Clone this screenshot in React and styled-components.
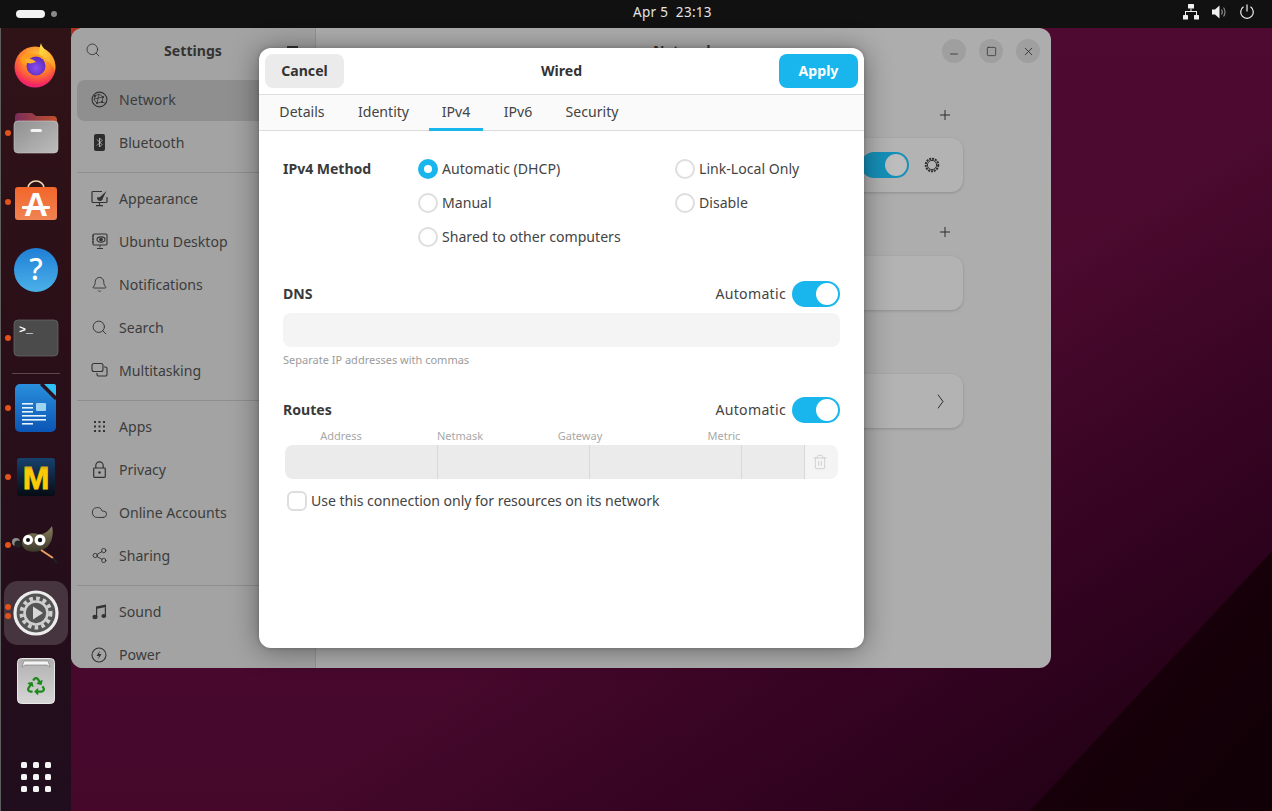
import React from 'react';
import styled, { createGlobalStyle } from 'styled-components';
import { Search, Bell, Cloud, Share2, Trash2, Plus, Minus, X, Square } from 'lucide-react';
import { FaRecycle } from 'react-icons/fa';

const FONT = '"Noto Sans", "Open Sans", sans-serif';

const Global = createGlobalStyle`
  html, body { margin: 0; padding: 0; width: 1272px; height: 811px; overflow: hidden; background: #300020; }
  * { box-sizing: border-box; }
  body { font-family: ${FONT}; font-size: 14.1px; color: #3a3a3a; }
`;

const Screen = styled.div`
  width: 1272px; height: 811px; display: flex; flex-direction: column; overflow: hidden;
`;
const TopBar = styled.header`
  height: 28px; flex: none; background: #111; display: grid; grid-template-columns: 633px auto 1fr; align-items: center; color: #e4e4e4;
`;
const Activities = styled.div`
  display: flex; align-items: center; gap: 6px; padding-left: 16px;
`;
const Pill = styled.span`
  width: 29px; height: 8px; border-radius: 4px; background: #f2f2f2;
`;
const WsDot = styled.span`
  width: 6px; height: 6px; border-radius: 50%; background: #8a8a8a;
`;
const Clock = styled.div`
  font-size: 13.5px; letter-spacing: .3px; white-space: pre; line-height: 22px; margin-top: -5px;
`;
const Tray = styled.div`
  display: flex; justify-content: flex-end; align-items: center; gap: 12px; padding-right: 17px; margin-top: -4px;
`;
const Desktop = styled.main`
  flex: 1; position: relative; display: flex;
  background:
    linear-gradient(133deg, transparent 87.85%, #170009 87.95%, #100006 100%),
    radial-gradient(circle at 71px 0, #b8341f 0, #a02c22 10px, transparent 40px),
    linear-gradient(145deg, transparent 58%, rgba(40,0,26,.75) 81%, rgba(20,0,12,.9) 100%),
    linear-gradient(180deg, #4e0a30 0%, #45082b 100%);
`;
const Dock = styled.nav`
  width: 71px; flex: none; display: flex; flex-direction: column; align-items: center; padding-top: 3px;
  border-left: 1px solid #5e5e5e;
  background: linear-gradient(180deg, #2f1317 0%, #2a0f18 40%, #200d1d 100%);
`;
const DockItem = styled.div`
  position: relative; width: 70px; height: 68.25px; flex: none; display: flex; align-items: center; justify-content: center;
  margin-left: -1px;
  ${p => p.$pushEnd ? 'margin-top: auto; height: 68px;' : ''}
`;
const DockActive = styled.div`
  width: 64px; height: 64px; border-radius: 14px; display: flex; align-items: center; justify-content: center;
  background: ${p => p.$on ? '#46343f' : 'transparent'};
`;
const RunDot = styled.span`
  position: absolute; left: 4px; top: ${p => p.$top}px; width: 6px; height: 6px; border-radius: 50%; background: #e1521d;
`;
const DockRule = styled.div`
  width: 48px; height: 1px; background: #5a4650; margin: 1px 0 0; flex: none;
`;
const AppGrid = styled.div`
  display: grid; grid-template-columns: repeat(3, 6px); grid-auto-rows: 6px; gap: 6px;
`;
const AppDot = styled.span`
  background: #f4f4f4; border-radius: 1.5px;
`;

const Window = styled.section`
  position: absolute; left: 71px; top: 0; width: 980px; height: 640px; border-radius: 12px; overflow: hidden; display: flex;
  background: #adadad;
`;
const Sidebar = styled.aside`
  width: 245px; flex: none; background: #a3a3a3; border-right: 1px solid #949494; padding: 0 6px; overflow: hidden;
  display: flex; flex-direction: column;
`;
const SideHeader = styled.div`
  height: 52px; flex: none; position: relative; display: flex; align-items: flex-start; justify-content: center; padding-top: 13px;
  font-weight: 700; color: #333;
`;
const SideSearch = styled.span`
  position: absolute; left: 8px; top: 14px; display: flex; color: #333;
`;
const Burger = styled.span`
  position: absolute; right: 11px; top: 18px; width: 11px; height: 1.5px; background: #333; box-shadow: 0 5px 0 #333, 0 10px 0 #333;
`;
const SideRow = styled.div`
  height: 41px; flex: none; margin-bottom: 2px; display: flex; align-items: center; padding: 0 0 2px 13px; gap: 11px; border-radius: 8px; color: #3c3c3c;
  background: ${p => p.$on ? '#8f8f8f' : 'transparent'};
`;
const SideIcon = styled.span`
  width: 18px; height: 18px; flex: none; display: flex; align-items: center; justify-content: center; color: #333;
`;
const SideRule = styled.div`
  height: 1px; flex: none; background: #8e8e8e; margin: 6px 0 6px;
`;
const Panel = styled.div`
  flex: 1; display: flex; flex-direction: column; align-items: center; min-width: 0;
`;
const PanelHeader = styled.div`
  width: 100%; height: 72px; flex: none; display: grid; grid-template-columns: 1fr auto 1fr; align-items: start; padding: 11px 11px 0 0;
`;
const PanelTitle = styled.div`
  font-weight: 700; color: #333; line-height: 24px; margin-left: 12px;
`;
const WinControls = styled.div`
  display: flex; justify-content: flex-end; gap: 13px;
`;
const WinBtn = styled.span`
  width: 24px; height: 24px; border-radius: 50%; background: #9f9f9f; display: flex; align-items: center; justify-content: center; color: #2c2c2c;
`;
const Content = styled.div`
  width: 559px; display: flex; flex-direction: column;
`;
const SectionHead = styled.div`
  height: 30px; margin-top: ${p => p.$mt || 0}px; display: flex; align-items: center; justify-content: flex-end; padding-right: 10px; color: #2c2c2c;
`;
const Card = styled.div`
  height: 54px; margin-top: ${p => p.$mt || 0}px; border-radius: 12px; background: #b3b3b3; box-shadow: 0 1px 3px rgba(0,0,0,.18);
  display: flex; align-items: center; justify-content: flex-end; gap: 15px; padding-right: ${p => p.$pr || 23}px;
`;
const DimSwitch = styled.span`
  width: 48px; height: 26px; border-radius: 13px; background: #1590b8; position: relative; display: block;
  &::after { content: ''; position: absolute; right: 2px; top: 2px; width: 22px; height: 22px; border-radius: 50%; background: #bdbdbd; }
`;

const Dialog = styled.div`
  position: absolute; left: 259px; top: 20px; width: 605px; height: 600px; border-radius: 12px; background: #fff; display: flex; flex-direction: column;
  box-shadow: 0 2px 28px rgba(0,0,0,.42), 0 0 4px rgba(0,0,0,.2);
  overflow: hidden;
`;
const DialogHeader = styled.div`
  height: 47px; flex: none; display: grid; grid-template-columns: 1fr auto 1fr; align-items: center; padding: 0 6px; border-bottom: 1px solid #dedede;
`;
const DialogTitle = styled.div`
  font-weight: 700; color: #333; margin-bottom: 2px;
`;
const HeaderBtn = styled.div`
  width: 79px; height: 34px; border-radius: 8px; display: flex; align-items: center; justify-content: center; font-weight: 700; padding-bottom: 2px;
  justify-self: ${p => p.$end ? 'end' : 'start'};
  background: ${p => p.$primary ? '#19b6ee' : '#ebebeb'}; color: ${p => p.$primary ? '#fff' : '#333'};
`;
const TabBar = styled.div`
  height: 36px; flex: none; background: #fafafa; border-bottom: 1px solid #dcdcdc; display: flex; padding-left: 7px; gap: 6px;
`;
const Tab = styled.div`
  padding: 1px 0 2px; display: flex; align-items: center; color: #444; height: 36px; margin-bottom: -1px;
  border-bottom: 3px solid ${p => p.$on ? '#19b6ee' : 'transparent'};
  width: ${p => p.$w}px; justify-content: center;
`;
const Body = styled.div`
  flex: 1; padding: 21px 24px 0; display: flex; flex-direction: column;
`;
const MethodGrid = styled.div`
  display: grid; grid-template-columns: 135px 257px 1fr; grid-auto-rows: 34px;
`;
const SectionLabel = styled.div`
  font-weight: 700; color: #3a3a3a; margin-bottom: 2px;
`;
const MethodLabel = styled(SectionLabel)`
  line-height: 33px; margin: 0; letter-spacing: -0.05px;
`;
const RadioRow = styled.div`
  display: flex; align-items: center; gap: 4px; color: #444;
  grid-column: ${p => p.$col};
`;
const Radio = styled.span`
  width: 20px; height: 20px; border-radius: 50%; flex: none; display: block;
  ${p => p.$on ? 'background: #19b6ee; position: relative;' : 'border: 2px solid #dedede; background: #fff;'}
  ${p => p.$on ? `&::after { content: ''; position: absolute; left: 6px; top: 6px; width: 8px; height: 8px; border-radius: 50%; background: #fff; }` : ''}
`;
const OptionText = styled.span`
  margin-bottom: 2px; letter-spacing: ${p => p.$ls || 0}px;
`;
const AutoRow = styled.div`
  display: flex; align-items: center; justify-content: space-between; height: 26px; margin-top: ${p => p.$mt}px;
`;
const AutoGroup = styled.div`
  display: flex; align-items: center; gap: 6px; color: #444;
`;
const Switch = styled.span`
  width: 48px; height: 26px; border-radius: 13px; background: #19b6ee; position: relative; display: block;
  &::after { content: ''; position: absolute; right: 2px; top: 2px; width: 22px; height: 22px; border-radius: 50%; background: #fff; }
`;
const DnsInput = styled.div`
  height: 34px; margin-top: 6px; border-radius: 8px; background: #f4f4f4;
`;
const Hint = styled.div`
  font-size: 11px; color: #9b9b9b; margin-top: 5px; line-height: 16px;
`;
const RouteHeads = styled.div`
  display: grid; grid-template-columns: 112px 126px 114px 174px; margin: 4px 0 0 2px; height: 17px;
  font-size: 11px; line-height: 17px; color: #a8a8a8; text-align: center;
`;
const RouteRow = styled.div`
  height: 34px; margin: 1px 2px 0; border-radius: 8px; overflow: hidden; display: grid; grid-template-columns: 153px 152px 152px 63px 33px;
`;
const RouteCell = styled.div`
  background: #ebebeb; border-right: 1px solid #d8d8d8;
`;
const RouteDelete = styled.div`
  background: #f4f4f4; display: flex; align-items: center; justify-content: center; color: #c4c4c4; padding-right: 3px;
`;
const CheckRow = styled.label`
  display: flex; align-items: center; gap: 4px; margin: 12px 0 0 4px; color: #444; height: 20px;
`;
const CheckBox = styled.span`
  width: 20px; height: 20px; border-radius: 6px; border: 2px solid #dedede; background: #fff; flex: none;
`;
const TrayIcon = styled.svg`
  display: block; flex: none;
`;

const Firefox = () => (
  <svg width="46" height="46" viewBox="0 0 46 46">
    <defs>
      <radialGradient id="ffb" cx=".55" cy=".25" r=".85"><stop offset="0" stopColor="#ffc63a"/><stop offset=".5" stopColor="#ff7a2a"/><stop offset=".8" stopColor="#f5295f"/><stop offset="1" stopColor="#d91f9a"/></radialGradient>
      <linearGradient id="ffy" x1="0" y1="0" x2=".6" y2="1"><stop offset="0" stopColor="#ffe94d"/><stop offset="1" stopColor="#ff9a20"/></linearGradient>
      <radialGradient id="ffp" cx=".5" cy=".6" r=".6"><stop offset="0" stopColor="#8a4ff0"/><stop offset="1" stopColor="#5a27b8"/></radialGradient>
    </defs>
    <circle cx="22" cy="25" r="20.5" fill="url(#ffb)"/>
    <path d="M28 1c1 5 5 7 9 11 5 5 6 11 5 17-3-8-9-12-15-13-1-5-1-10 1-15z" fill="url(#ffy)"/>
    <path d="M7 9c-1 3-1 5 0 7 4-4 10-6 16-4 6 1 9 5 9 5-3-1-8-3-12 0-3 0-6 2-7 3 3 0 6 1 7 3-3 1-8 1-11-2-2-3-4-8-2-12z" fill="#ff9b1f"/>
    <circle cx="23" cy="24" r="9.5" fill="url(#ffp)"/>
    <path d="M12 17c4-1 9 0 11 3-3 1-6 2-8 1-2 0-3-2-3-4z" fill="#ffb02e"/>
  </svg>
);
const Files = () => (
  <svg width="46" height="42" viewBox="0 0 46 42">
    <defs>
      <linearGradient id="fb" x1="0" x2="1"><stop offset="0" stopColor="#7a2d5a"/><stop offset="1" stopColor="#c0502c"/></linearGradient>
      <linearGradient id="ff" x1="0" y1="0" x2="1" y2="1"><stop offset="0" stopColor="#8f8f8f"/><stop offset="1" stopColor="#bdbdbd"/></linearGradient>
    </defs>
    <path d="M2 5a4 4 0 0 1 4-4h13l4 3h17a4 4 0 0 1 4 4v10H2z" fill="url(#fb)"/>
    <rect x="1" y="9" width="44" height="32" rx="4" fill="url(#ff)" stroke="#c9c9c9" strokeWidth=".6"/>
    <rect x="17.5" y="17" width="11.5" height="3" rx="1.5" fill="#f4f4f4"/>
  </svg>
);
const Store = () => (
  <svg width="46" height="46" viewBox="0 0 46 46">
    <defs><linearGradient id="sg" x1="0" y1="0" x2="0" y2="1"><stop offset="0" stopColor="#f2662a"/><stop offset="1" stopColor="#ef8354"/></linearGradient></defs>
    <path d="M15 11V9a8 7 0 0 1 16 0v2" fill="none" stroke="#f3d9b0" strokeWidth="1.6"/>
    <rect x="2" y="8" width="42" height="33" rx="3" fill="url(#sg)"/>
    <text x="23" y="37" textAnchor="middle" fontFamily="Liberation Sans" fontWeight="700" fontSize="33" fill="#fff">A</text>
    <rect x="9" y="27" width="28" height="3" rx="1" fill="#fff"/>
  </svg>
);
const Help = () => (
  <svg width="46" height="46" viewBox="0 0 46 46">
    <defs><linearGradient id="hg" x1="0" y1="0" x2="0" y2="1"><stop offset="0" stopColor="#1f7fd6"/><stop offset="1" stopColor="#4bb1e8"/></linearGradient></defs>
    <circle cx="23" cy="23" r="22" fill="url(#hg)"/>
    <text x="23" y="33" textAnchor="middle" fontFamily="Noto Sans" fontWeight="500" fontSize="30" fill="#fff">?</text>
  </svg>
);
const Terminal = () => (
  <svg width="46" height="38" viewBox="0 0 46 38">
    <rect x="1" y="1" width="44" height="36" rx="4" fill="#4b4b4b" stroke="#666" strokeWidth=".8"/>
    <text x="6" y="14" fontFamily="Liberation Mono" fontWeight="700" fontSize="11.5" fill="#fff">{'>_'}</text>
  </svg>
);
const Writer = () => (
  <svg width="42" height="48" viewBox="0 0 42 48">
    <defs>
      <linearGradient id="wg" x1="0" y1="0" x2="0" y2="1"><stop offset="0" stopColor="#2a8fdc"/><stop offset="1" stopColor="#0b55b4"/></linearGradient>
    </defs>
    <path d="M5 0h21l15 15v28a5 5 0 0 1-5 5H5a5 5 0 0 1-5-5V5a5 5 0 0 1 5-5z" fill="url(#wg)"/>
    <path d="M26 0l15 15" stroke="#2b1320" strokeWidth="3"/>
    <path d="M29 0h10a2 2 0 0 1 2 2v10z" fill="#2fc0f5"/>
    <rect x="7" y="19" width="11" height="1.6" fill="#e8f3fc"/><rect x="7" y="23" width="11" height="1.6" fill="#e8f3fc"/><rect x="7" y="27" width="11" height="1.6" fill="#e8f3fc"/>
    <rect x="21" y="19" width="10" height="8" rx="1" fill="#9fd3f2"/>
    <rect x="7" y="31" width="24" height="1.6" fill="#e8f3fc"/><rect x="7" y="35" width="24" height="1.6" fill="#e8f3fc"/><rect x="7" y="39" width="11" height="1.6" fill="#e8f3fc"/>
  </svg>
);
const MLogo = () => (
  <svg width="38" height="38" viewBox="0 0 38 38">
    <defs>
      <linearGradient id="mg" x1="0" y1="0" x2="0" y2="1"><stop offset="0" stopColor="#17416d"/><stop offset="1" stopColor="#060c14"/></linearGradient>
      <linearGradient id="my" gradientUnits="userSpaceOnUse" x1="0" y1="5" x2="0" y2="31"><stop offset="0" stopColor="#b7892e"/><stop offset=".3" stopColor="#ffcb05"/></linearGradient>
    </defs>
    <rect width="38" height="38" rx="3" fill="url(#mg)"/>
    <text x="19" y="31" textAnchor="middle" fontFamily="Liberation Sans" fontWeight="700" fontSize="32" fill="url(#my)" stroke="url(#my)" strokeWidth=".8">M</text>
  </svg>
);
const Gimp = () => (
  <svg width="48" height="40" viewBox="0 0 48 40">
    <defs><linearGradient id="gg" x1="0" y1="0" x2="0" y2="1"><stop offset="0" stopColor="#8a8060"/><stop offset="1" stopColor="#3c3828"/></linearGradient></defs>
    <path d="M12 12c3-3 8-5 14-3 5 1 10-2 14-8 2 8 0 17-6 22-6 4-14 5-20 2-4-3-6-8-2-13z" fill="url(#gg)"/>
    <circle cx="4" cy="17" r="4" fill="#8d8d8d"/><circle cx="6" cy="19" r="3.6" fill="#222"/>
    <circle cx="16" cy="15" r="5" fill="#fff"/><circle cx="16" cy="15" r="2" fill="#111"/>
    <circle cx="28" cy="15" r="5.5" fill="#fff"/><circle cx="28" cy="15" r="2.2" fill="#111"/>
    <path d="M29 25l12 8" stroke="#e8a060" strokeWidth="2"/><path d="M41 33l4 5" stroke="#222" strokeWidth="2"/>
  </svg>
);
const SettingsApp = () => (
  <svg width="46" height="46" viewBox="0 0 46 46">
    <circle cx="23" cy="23" r="21" fill="#555"/>
    <circle cx="23" cy="23" r="21" fill="none" stroke="#ececec" strokeWidth="3.2"/>
    <circle cx="23" cy="23" r="14.5" fill="none" stroke="#cfcfcf" strokeWidth="4" strokeDasharray="3.6 3.2"/>
    <circle cx="23" cy="23" r="11.5" fill="none" stroke="#cfcfcf" strokeWidth="2.6"/>
    <path d="M20 16.5l10 6.5-10 6.5z" fill="#d8d8d8"/>
  </svg>
);
const TrashBin = () => (
  <svg width="38" height="46" viewBox="0 0 38 46">
    <defs><linearGradient id="tg" x1="0" y1="0" x2="0" y2="1"><stop offset="0" stopColor="#b0b0b0"/><stop offset="1" stopColor="#d6d6d6"/></linearGradient></defs>
    <rect x=".5" y=".5" width="37" height="45" rx="4" fill="url(#tg)" stroke="#e8e8e8"/>
    <path d="M5 9l2-6h24l2 6-3-2H8z" fill="#f4f4f4" stroke="#777" strokeWidth=".6"/>
    <foreignObject x="9.500" y="19" width="19" height="19"><FaRecycle size={18} color="#1e8a1e"/></foreignObject>
  </svg>
);

const Globe = () => (
  <svg width="17" height="17" viewBox="0 0 17 17" fill="none" stroke="#333" strokeWidth="1.1">
    <circle cx="8.5" cy="8.5" r="7.4"/>
    <path d="M4 5l4-2 4 3-1 5-5 1-3-3zM8 3l-2 9M12 6l-9 2M11 11l3 1" strokeWidth=".8"/>
    <g fill="#333" stroke="none"><circle cx="4" cy="5" r="1.1"/><circle cx="12" cy="6" r="1.1"/><circle cx="6" cy="12" r="1.1"/><circle cx="11" cy="11" r="1.1"/></g>
  </svg>
);
const BluetoothBadge = () => (
  <svg width="11" height="17" viewBox="0 0 11 17">
    <rect width="11" height="17" rx="2" fill="#2c2c2c"/>
    <path d="M3 5.5l5 5-2.5 2.5V4l2.5 2.5-5 5" fill="none" stroke="#c8c8c8" strokeWidth=".8"/>
  </svg>
);
const Appearance = () => (
  <svg width="17" height="17" viewBox="0 0 17 17" fill="none" stroke="#333" strokeWidth="1.2">
    <path d="M11 1.5H2a1 1 0 0 0-1 1v9a1 1 0 0 0 1 1h13a1 1 0 0 0 1-1V7"/>
    <path d="M8.5 13v2M5 15.7h7"/>
    <path d="M15.5 1L9 7l-3 .5c0 2 1 3.5 3 3.5s3-1.500 3-3z" fill="#333" stroke="none"/>
  </svg>
);
const UbuntuDesk = () => (
  <svg width="17" height="17" viewBox="0 0 17 17" fill="none" stroke="#333" strokeWidth="1.1">
    <rect x="2" y="1" width="14" height="11" rx="1.2"/>
    <path d="M9 12.500v2M6 15.500h6M1 3h2M1 6h2M1 9h2"/>
    <ellipse cx="10" cy="6.500" rx="4" ry="2.600"/><circle cx="10" cy="6.500" r="1.300" fill="#333"/>
  </svg>
);
const Multitask = () => (
  <svg width="17" height="17" viewBox="0 0 17 17" fill="none" stroke="#333" strokeWidth="1.1">
    <rect x="1" y="1.500" width="11" height="8" rx="2"/>
    <path d="M13 5h1.500a1.500 1.500 0 0 1 1.500 1.500v6a1.500 1.500 0 0 1-1.500 1.500h-7A1.500 1.500 0 0 1 6 12.500V11"/>
  </svg>
);
const AppsIcon = () => (
  <svg width="11" height="11" viewBox="0 0 11 11" fill="#333">
    {[0, 4.5, 9].flatMap(y => [0, 4.5, 9].map(x => <rect key={`${x}-${y}`} x={x} y={y} width="2" height="2"/>))}
  </svg>
);
const Padlock = () => (
  <svg width="13" height="17" viewBox="0 0 13 17" fill="none" stroke="#333" strokeWidth="1.2">
    <rect x=".7" y="7" width="11.600" height="9.300" rx=".8"/>
    <path d="M2.800 7V4.500a3.700 3.700 0 0 1 7.400 0V7"/>
    <circle cx="6.500" cy="11.500" r="1.300" fill="#333" stroke="none"/>
  </svg>
);
const Note = () => (
  <svg width="15" height="16" viewBox="0 0 15 16" fill="#333">
    <path d="M4 2.500L14 .5v2.500L5.200 4.800V13H4zM12.800 2.500H14V12h-1.200z"/>
    <ellipse cx="3" cy="13" rx="2.600" ry="2.200"/><ellipse cx="11.800" cy="12" rx="2.400" ry="2.100"/>
  </svg>
);
const Power = () => (
  <svg width="16" height="16" viewBox="0 0 16 16" fill="none" stroke="#333" strokeWidth="1.1">
    <circle cx="8" cy="8" r="7"/><path d="M9 3.500L5.500 9H8l-1 3.500L10.500 7H8z" fill="#333" stroke="none"/>
  </svg>
);
const GearOutline = () => (
  <svg width="16" height="16" viewBox="0 0 16 16" fill="none" stroke="#2e2e2e">
    <circle cx="8" cy="8" r="6.300" strokeWidth="2" strokeDasharray="2 .9"/>
    <circle cx="8" cy="8" r="4.600" strokeWidth="1"/>
  </svg>
);
const Chevron = () => (
  <svg width="7" height="15" viewBox="0 0 7 15" fill="none" stroke="#2e2e2e" strokeWidth="1">
    <path d="M1 .7l5 6.800-5 6.800"/>
  </svg>
);

const icon = { size: 17, strokeWidth: 1.3 };
const sideGroups = [
  [['Network', <Globe/>, true], ['Bluetooth', <BluetoothBadge/>]],
  [['Appearance', <Appearance/>], ['Ubuntu Desktop', <UbuntuDesk/>], ['Notifications', <Bell {...icon}/>], ['Search', <Search {...icon}/>], ['Multitasking', <Multitask/>]],
  [['Apps', <AppsIcon/>], ['Privacy', <Padlock/>], ['Online Accounts', <Cloud {...icon}/>], ['Sharing', <Share2 {...icon}/>]],
  [['Sound', <Note/>], ['Power', <Power/>]],
];

const dockTop = [
  [<Firefox/>, []], [<Files/>, [31]], [<Store/>, [31]], [<Help/>, []], [<Terminal/>, [31]],
];
const dockBottom = [
  [<Writer/>, [31]], [<MLogo/>, [31]], [<Gimp/>, [31]], [<SettingsApp/>, [25, 34], true], [<TrashBin/>, []],
];
const DockEntry = ({ art, dots, on }) => (
  <DockItem>
    <DockActive $on={on}>{art}</DockActive>
    {dots.map(t => <RunDot key={t} $top={t}/>)}
  </DockItem>
);

export default function App() {
  return (
    <Screen>
      <Global/>
      <TopBar>
        <Activities><Pill/><WsDot/></Activities>
        <Clock>Apr 5  23:13</Clock>
        <Tray>
          <TrayIcon width="16" height="16" viewBox="0 0 16 16" fill="#f0f0f0">
            <rect x="5" y="0" width="6" height="4.500" rx=".6"/><rect x="0" y="11" width="5" height="4.500" rx=".6"/><rect x="11" y="11" width="5" height="4.500" rx=".6"/>
            <path d="M7.500 4.500h1V7h5.500v4h-1V8H3v3H2V7h5.500z"/>
          </TrayIcon>
          <TrayIcon width="16" height="16" viewBox="0 0 16 16">
            <path d="M1 5.500h3L8.500 1.500v13L4 10.500H1z" fill="#f0f0f0"/>
            <path d="M10.500 5.500c1 1.500 1 3.500 0 5M12.500 3.500c2 2.500 2 6.500 0 9" fill="none" stroke="#888" strokeWidth="1.200"/>
          </TrayIcon>
          <TrayIcon width="16" height="16" viewBox="0 0 16 16" fill="none" stroke="#f0f0f0" strokeWidth="1.200">
            <path d="M4.500 2.800a6.300 6.300 0 1 0 7 0M8 .5v7"/>
          </TrayIcon>
        </Tray>
      </TopBar>
      <Desktop>
        <Dock>
          {dockTop.map(([art, dots], i) => <DockEntry key={i} art={art} dots={dots}/>)}
          <DockRule/>
          {dockBottom.map(([art, dots, on], i) => <DockEntry key={i} art={art} dots={dots} on={on}/>)}
          <DockItem $pushEnd>
            <AppGrid>{Array.from({ length: 9 }, (_, i) => <AppDot key={i}/>)}</AppGrid>
          </DockItem>
        </Dock>
        <Window>
          <Sidebar>
            <SideHeader>
              <SideSearch><Search size={16} strokeWidth={1.3}/></SideSearch>
              Settings
              <Burger/>
            </SideHeader>
            {sideGroups.map((g, i) => (
              <React.Fragment key={i}>
                {i > 0 && <SideRule/>}
                {g.map(([label, ic, on]) => (
                  <SideRow key={label} $on={on}><SideIcon>{ic}</SideIcon>{label}</SideRow>
                ))}
              </React.Fragment>
            ))}
          </Sidebar>
          <Panel>
            <PanelHeader>
              <span/>
              <PanelTitle>Network</PanelTitle>
              <WinControls>
                <WinBtn><Minus size={12} strokeWidth={1.6} style={{ marginTop: 6 }}/></WinBtn>
                <WinBtn><Square size={11} strokeWidth={1.6}/></WinBtn>
                <WinBtn><X size={13} strokeWidth={1.6}/></WinBtn>
              </WinControls>
            </PanelHeader>
            <Content>
              <SectionHead><Plus size={16} strokeWidth={1.5}/></SectionHead>
              <Card $mt={8}><DimSwitch/><GearOutline/></Card>
              <SectionHead $mt={25}><Plus size={16} strokeWidth={1.5}/></SectionHead>
              <Card $mt={9}/>
              <Card $mt={64} $pr={19}><Chevron/></Card>
            </Content>
          </Panel>
        </Window>
        <Dialog>
          <DialogHeader>
            <HeaderBtn>Cancel</HeaderBtn>
            <DialogTitle>Wired</DialogTitle>
            <HeaderBtn $primary $end>Apply</HeaderBtn>
          </DialogHeader>
          <TabBar>
            <Tab $w={72}>Details</Tab>
            <Tab $w={79}>Identity</Tab>
            <Tab $w={54} $on>IPv4</Tab>
            <Tab $w={58}>IPv6</Tab>
            <Tab $w={78}>Security</Tab>
          </TabBar>
          <Body>
            <MethodGrid>
              <MethodLabel>IPv4 Method</MethodLabel>
              <RadioRow $col={2}><Radio $on/><OptionText>Automatic (DHCP)</OptionText></RadioRow>
              <RadioRow $col={3}><Radio/><OptionText>Link-Local Only</OptionText></RadioRow>
              <RadioRow $col={2}><Radio/><OptionText>Manual</OptionText></RadioRow>
              <RadioRow $col={3}><Radio/><OptionText>Disable</OptionText></RadioRow>
              <RadioRow $col={2}><Radio/><OptionText>Shared to other computers</OptionText></RadioRow>
            </MethodGrid>
            <AutoRow $mt={27}>
              <SectionLabel>DNS</SectionLabel>
              <AutoGroup><OptionText $ls={0.3}>Automatic</OptionText><Switch/></AutoGroup>
            </AutoRow>
            <DnsInput/>
            <Hint>Separate IP addresses with commas</Hint>
            <AutoRow $mt={29}>
              <SectionLabel>Routes</SectionLabel>
              <AutoGroup><OptionText $ls={0.3}>Automatic</OptionText><Switch/></AutoGroup>
            </AutoRow>
            <RouteHeads><span>Address</span><span>Netmask</span><span>Gateway</span><span>Metric</span></RouteHeads>
            <RouteRow>
              <RouteCell/><RouteCell/><RouteCell/><RouteCell/>
              <RouteDelete><Trash2 size={16} strokeWidth={1.1}/></RouteDelete>
            </RouteRow>
            <CheckRow><CheckBox/><OptionText $ls={-0.05}>Use this connection only for resources on its network</OptionText></CheckRow>
          </Body>
        </Dialog>
      </Desktop>
    </Screen>
  );
}
